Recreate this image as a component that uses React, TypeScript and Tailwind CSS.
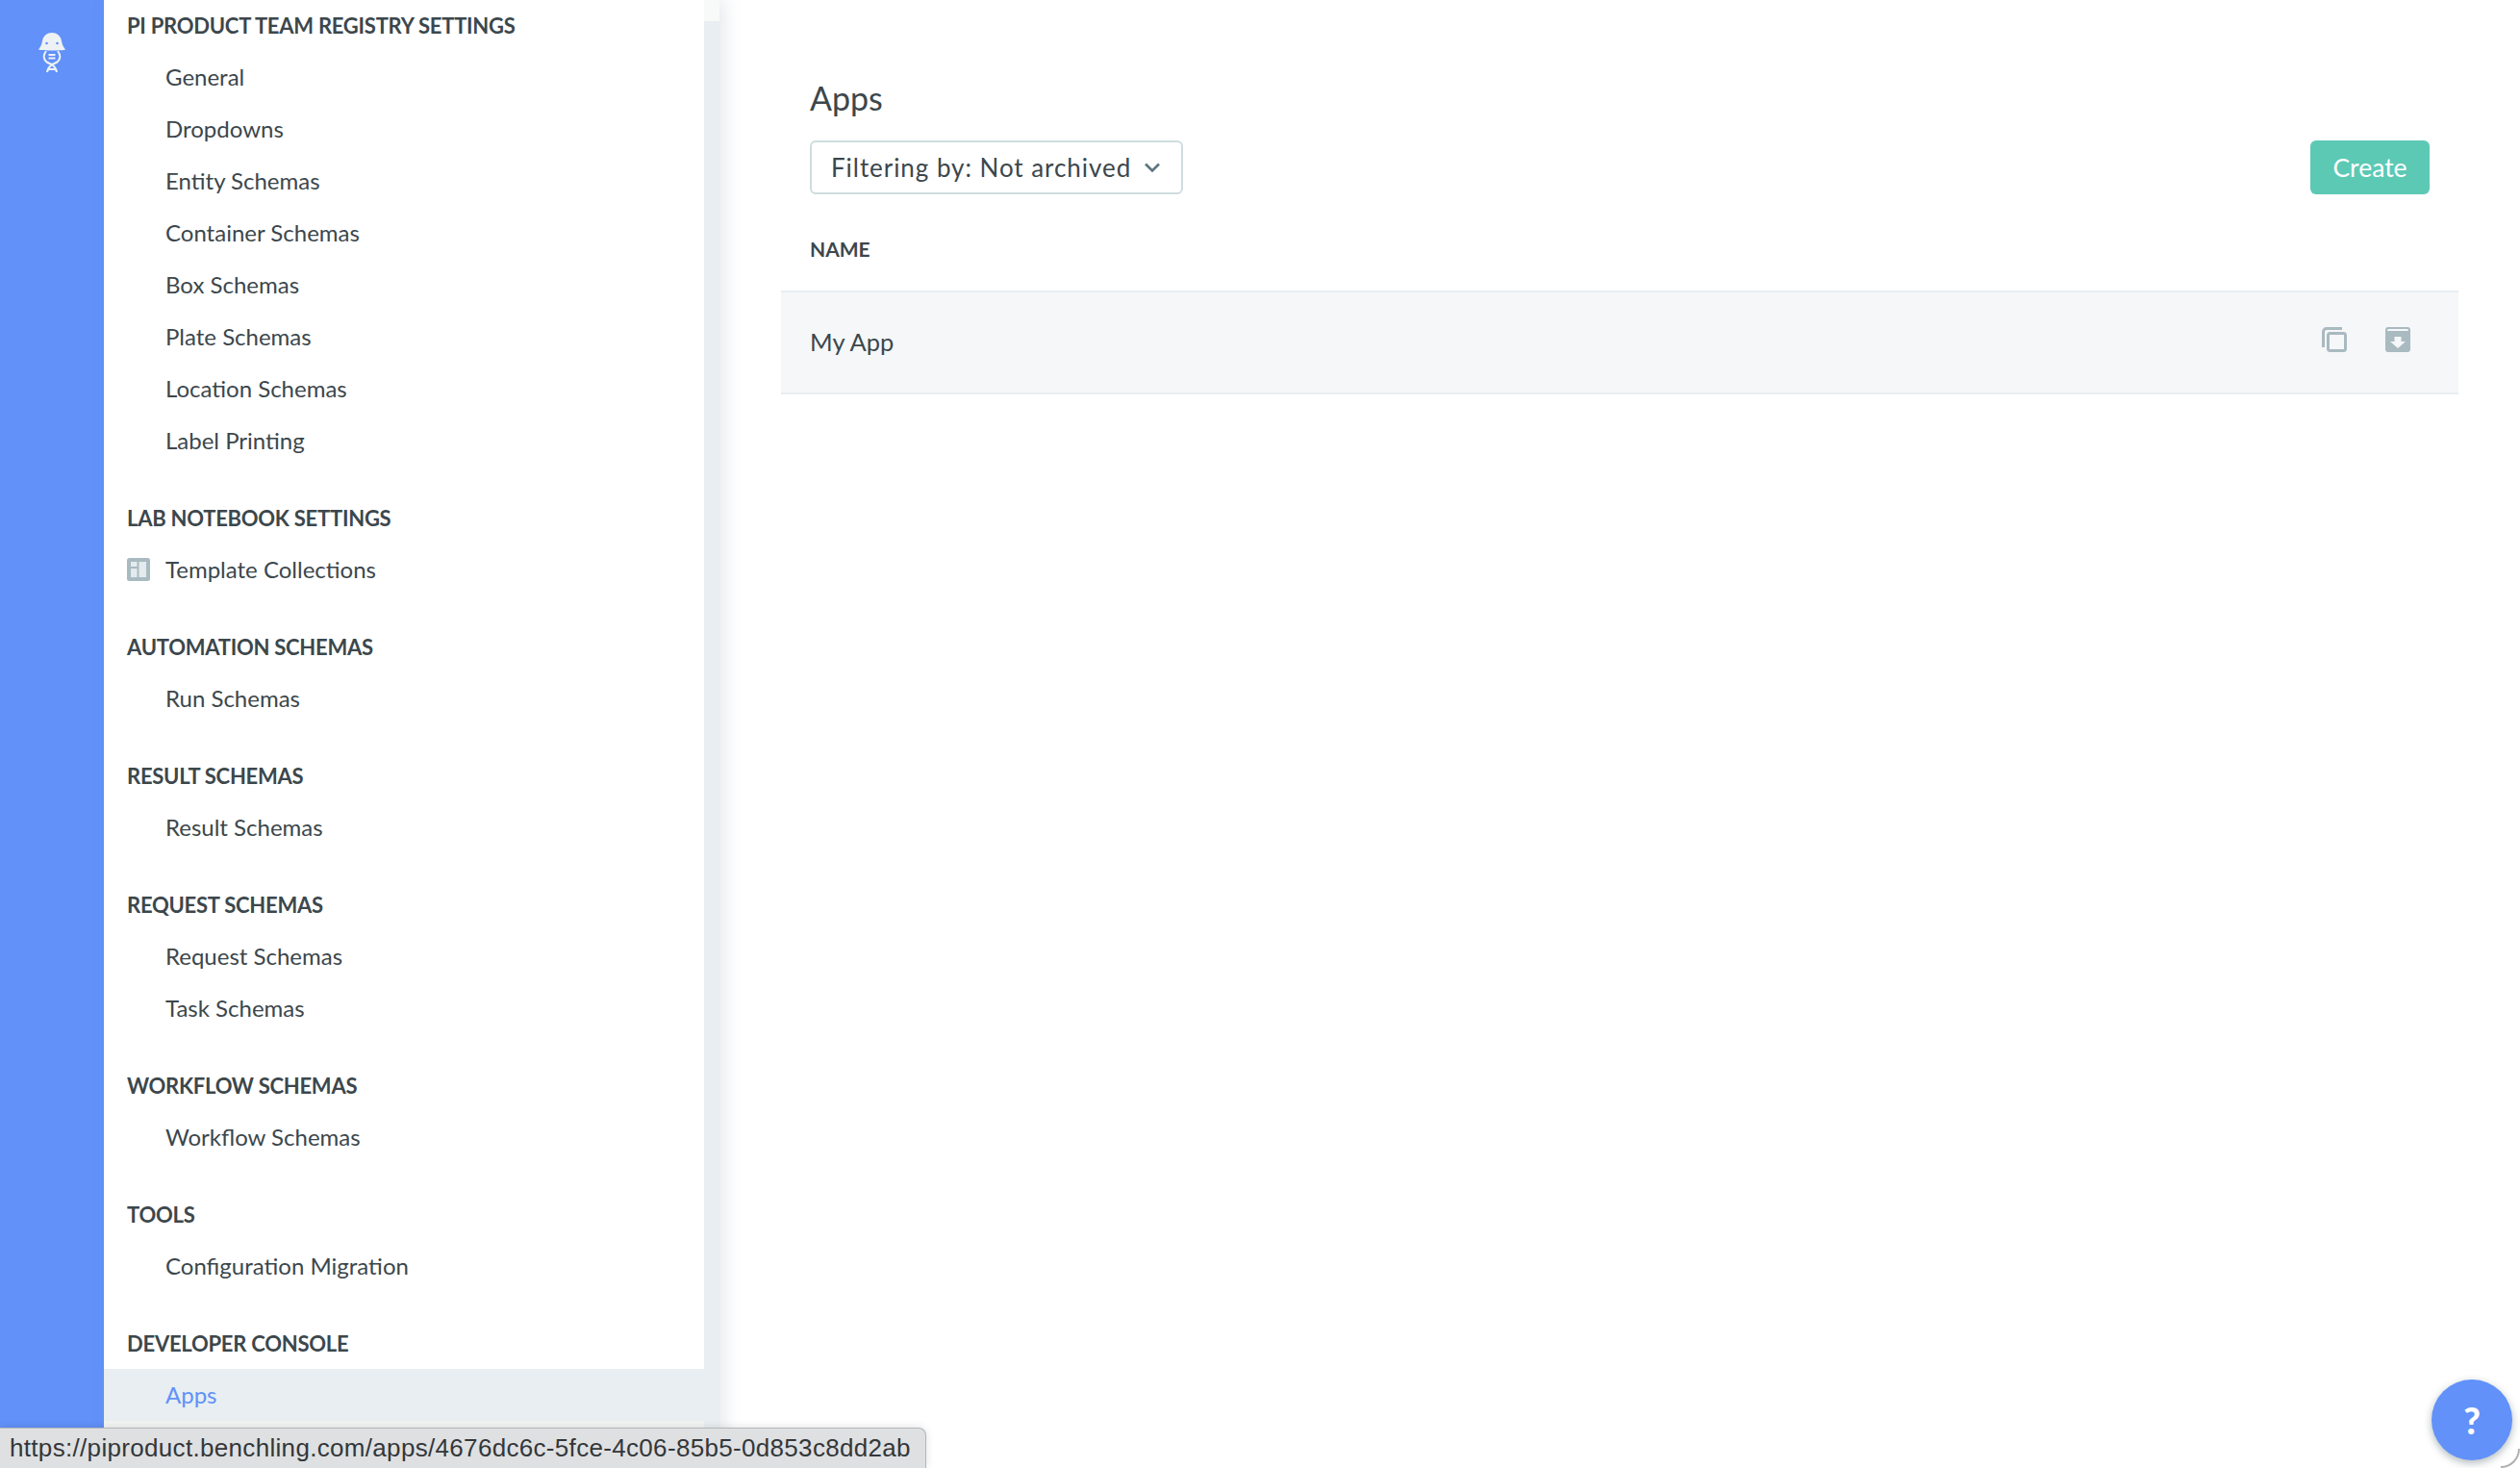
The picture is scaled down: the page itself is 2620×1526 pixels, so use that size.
const FONT = "font-['Lato','Open_Sans',sans-serif]";

type Seccion = { titulo: string; items: { nombre: string; icono?: boolean; activo?: boolean }[] };

const SECCIONES: Seccion[] = [
  {
    titulo: 'PI PRODUCT TEAM REGISTRY SETTINGS',
    items: [
      { nombre: 'General' },
      { nombre: 'Dropdowns' },
      { nombre: 'Entity Schemas' },
      { nombre: 'Container Schemas' },
      { nombre: 'Box Schemas' },
      { nombre: 'Plate Schemas' },
      { nombre: 'Location Schemas' },
      { nombre: 'Label Printing' },
    ],
  },
  { titulo: 'LAB NOTEBOOK SETTINGS', items: [{ nombre: 'Template Collections', icono: true }] },
  { titulo: 'AUTOMATION SCHEMAS', items: [{ nombre: 'Run Schemas' }] },
  { titulo: 'RESULT SCHEMAS', items: [{ nombre: 'Result Schemas' }] },
  { titulo: 'REQUEST SCHEMAS', items: [{ nombre: 'Request Schemas' }, { nombre: 'Task Schemas' }] },
  { titulo: 'WORKFLOW SCHEMAS', items: [{ nombre: 'Workflow Schemas' }] },
  { titulo: 'TOOLS', items: [{ nombre: 'Configuration Migration' }] },
  { titulo: 'DEVELOPER CONSOLE', items: [{ nombre: 'Apps', activo: true }] },
];

function Logo() {
  return (
    <svg width="28" height="42" viewBox="0 0 28 42" fill="none">
      <path
        d="M0 17.5C2 15 3.5 12 4 8.5 5 3 9 0 14 0s9 3 10 8.5c.5 3.5 2 6.5 4 9-1 .6-4 .9-14 .9S1 18.100 0 17.500Z"
        fill="#eef2f5"
      />
      <circle cx="8.500" cy="11" r="1.300" fill="#6191f9" />
      <circle cx="19.500" cy="11" r="1.300" fill="#6191f9" />
      <path
        d="M8 19c-3 4-3 8 0 11 2 2 5 2 7 4 2 1.500 3.500 4 4 7M20 19c3 4 3 8 0 11-2 2-5 2-7 4-2 1.500-3.500 4-4 7"
        stroke="#eef2f5"
        strokeWidth="2"
      />
      <path d="M10.500 23h7M10.500 26.500h7M11 38h6" stroke="#eef2f5" strokeWidth="1.800" />
    </svg>
  );
}

function IconoPlantilla() {
  return (
    <svg width="24" height="24" viewBox="0 0 24 24" className="shrink-0">
      <rect x="0" y="0" width="24" height="24" rx="2.500" fill="#a9bac0" />
      <rect x="4" y="4" width="6.500" height="5" fill="#e4ebee" />
      <rect x="4" y="11" width="6.500" height="9" fill="#e4ebee" />
      <rect x="12.500" y="4" width="7.500" height="16" fill="#e4ebee" />
    </svg>
  );
}

function IconoCopiar() {
  return (
    <svg width="26" height="26" viewBox="0 0 26 26" fill="none">
      <path d="M21 1.500H5A3.500 3.500 0 0 0 1.500 5v16" stroke="#a9bac0" strokeWidth="3" />
      <rect x="6.500" y="6.500" width="18" height="18" rx="2" stroke="#a9bac0" strokeWidth="3" />
    </svg>
  );
}

function IconoArchivar() {
  return (
    <svg width="26" height="26" viewBox="0 0 26 26">
      <path d="M3 0h20a3 3 0 0 1 3 3v20a3 3 0 0 1-3 3H3a3 3 0 0 1-3-3V3a3 3 0 0 1 3-3Z" fill="#a9bac0" />
      <path d="M3.500 2h19a1.500 1.500 0 0 1 1.500 1.500V4H2v-.5A1.500 1.500 0 0 1 3.500 2Z" fill="#f5f7f9" />
      <path d="M9.500 10h7v5H21L13 22 5 15h4.500Z" fill="#f5f7f9" />
    </svg>
  );
}

export default function App() {
  return (
    <div className={`${FONT} relative flex h-[1526px] w-[2620px] overflow-hidden bg-white text-[#3c474c]`}>
      <div className="flex w-[108px] shrink-0 justify-center bg-[#6191f9] pt-[34px]">
        <Logo />
      </div>

      <aside className="relative z-10 flex w-[640px] shrink-0 shadow-[6px_0_16px_rgba(120,140,150,0.18)]">
        <nav className="w-[624px] shrink-0 bg-white">
          {SECCIONES.map((s, i) => (
            <section key={s.titulo} className={i === 0 ? '' : 'mt-[26px]'}>
              <h2
                className={`flex ${i === 0 ? 'h-[53px]' : 'h-[54px]'} items-center pl-[24px] text-[22px] font-bold tracking-[-0.25px] text-[#3c474c]`}
              >
                {s.titulo}
              </h2>
              {s.items.map((it) => (
                <a
                  key={it.nombre}
                  className={`flex h-[54px] items-center pb-[1px] text-[24px] ${it.activo ? 'bg-[#e8eef1] text-[#6191f9]' : ''} ${it.icono ? 'gap-[16px] pl-[24px]' : 'pl-[64px]'}`}
                >
                  {it.icono && <IconoPlantilla />}
                  {it.nombre}
                </a>
              ))}
            </section>
          ))}
          <div className="h-[8px] bg-[#f3f4f4]" />
        </nav>
        <div className="flex w-[16px] shrink-0 flex-col bg-[#e8eef1]">
          <div className="h-[22px] bg-[#f8fafa]" />
        </div>
      </aside>

      <main className="flex-1 pl-[64px] pr-[64px] pt-[78px]">
        <h1 className="pl-[30px] text-[34px] leading-[48px]">Apps</h1>
        <div className="mt-[20px] flex items-center justify-between pl-[30px] pr-[30px]">
          <button className="flex h-[56px] w-[388px] items-center justify-between rounded-[6px] border-2 border-[#cfdcdf] pl-[20px] pr-[21px] text-[26px] tracking-[0.95px] text-[#3c474c]">
            Filtering by: Not archived
            <svg width="18" height="12" viewBox="0 0 18 12" fill="none">
              <path d="M2 2.500 9 9.500 16 2.500" stroke="#5d7680" strokeWidth="2.600" />
            </svg>
          </button>
          <button className="h-[56px] w-[124px] rounded-[6px] bg-[#5cc9b5] pt-[2px] text-[26.500px] text-white">Create</button>
        </div>
        <div className="mt-[43px] pl-[30px] text-[21px] font-bold leading-[28px]">NAME</div>
        <div className="mt-[29px] flex h-[108px] items-center justify-between border-y-2 border-[#e8eef1] bg-[#f5f7f9] pl-[30px] pr-[50px]">
          <span className="pb-[2px] text-[25.500px]">My App</span>
          <div className="flex gap-[40px] pb-[6px]">
            <IconoCopiar />
            <IconoArchivar />
          </div>
        </div>
      </main>

      <div className="absolute bottom-0 left-0 z-20 flex h-[42px] w-[963px] items-center rounded-tr-[8px] border-r border-t border-[#b5b6b8] bg-[#dfe0e2] pl-[10px] font-['Liberation_Sans',sans-serif] text-[26px] tracking-[0.32px] text-[#33373a] shadow-[0_0_10px_rgba(0,0,0,0.12)]">
        https://piproduct.benchling.com/apps/4676dc6c-5fce-4c06-85b5-0d853c8dd2ab
      </div>

      <button className="absolute left-[2528px] top-[1434px] z-20 flex h-[84px] w-[84px] items-center justify-center rounded-full bg-[#6191f9] text-[38px] font-black text-white shadow-[0_3px_8px_rgba(60,80,90,0.4)]">
        ?
      </button>
      <div className="absolute bottom-0 right-0 z-10 h-[20px] w-[20px] rounded-br-[20px] border-b-2 border-r-2 border-[#b0b0b0]" />
    </div>
  );
}
